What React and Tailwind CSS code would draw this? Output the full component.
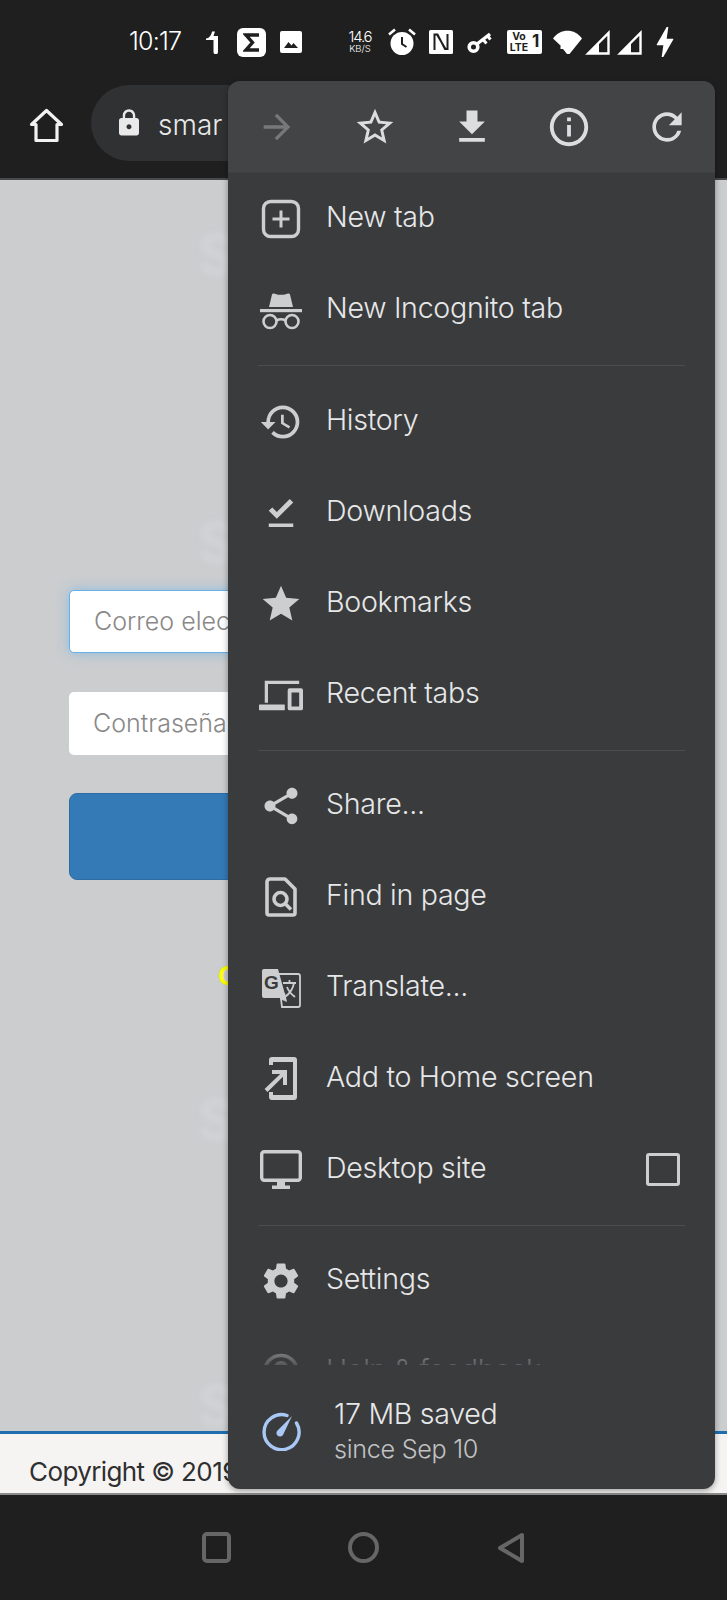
import {
  MdArrowForward,
  MdStarBorder,
  MdFileDownload,
  MdInfoOutline,
  MdRefresh,
  MdHistory,
  MdFileDownloadDone,
  MdStar,
  MdShare,
  MdSettings,
  MdHelpOutline,
  MdBolt,
  MdLock,
} from "react-icons/md";

const sans = "font-['Inter','Liberation_Sans',Arial,sans-serif]";

function HomeIcon() {
  return (
    <svg width="35" height="35" viewBox="0 0 35 35" fill="none" stroke="#f2f2f2" strokeWidth="3.200" strokeLinejoin="round">
      <path d="M17.500 2.500 2.500 16.500h4.500v16h21v-16h4.500z" />
    </svg>
  );
}

function NewTabIcon() {
  return (
    <svg width="40" height="40" viewBox="0 0 40 40" fill="none" stroke="currentColor">
      <rect x="2.500" y="2.500" width="35" height="35" rx="7" strokeWidth="3.400" />
      <path d="M20 11.500v17M11.500 20h17" strokeWidth="3" />
    </svg>
  );
}

function IncognitoIcon() {
  return (
    <svg width="44" height="40" viewBox="0 0 44 40" fill="currentColor">
      <path d="M10 17 13 4.500c.3-1 1.200-1.300 2-1l4 1.300h6l4-1.300c.8-.3 1.700 0 2 1L34 17z" />
      <rect x="1" y="19" width="42" height="3.200" />
      <g fill="none" stroke="currentColor" strokeWidth="2.600">
        <circle cx="11" cy="31.500" r="6.500" />
        <circle cx="33" cy="31.500" r="6.500" />
        <path d="M17.500 30.500c2.800-1.600 6.200-1.600 9 0" />
      </g>
    </svg>
  );
}

function RecentTabsIcon() {
  return (
    <svg width="46" height="32" viewBox="0 0 46 32" fill="currentColor">
      <path d="M6 1h36v3.400H9.400V24H6z" />
      <rect x="0" y="26" width="27" height="6" rx="0.500" />
      <path fillRule="evenodd" d="M32 9h12a2 2 0 0 1 2 2v19a2 2 0 0 1-2 2H32a2 2 0 0 1-2-2V11a2 2 0 0 1 2-2zm2 4.500V28h8V13.500z" />
    </svg>
  );
}

function FindIcon() {
  return (
    <svg width="32" height="40" viewBox="0 0 32 40" fill="none" stroke="currentColor" strokeWidth="3.600">
      <path d="M5 2h15l10 10v24a2 2 0 0 1-2 2H4a2 2 0 0 1-2-2V5a3 3 0 0 1 3-3z" strokeLinejoin="round" />
      <circle cx="15.500" cy="22" r="6.500" />
      <path d="M20.500 27 26 32.500" />
    </svg>
  );
}

function TranslateIcon() {
  return (
    <svg width="40" height="40" viewBox="0 0 40 40">
      <path d="M17 6h20a2 2 0 0 1 2 2v29a2 2 0 0 1-2 2H21l-4-33z" fill="none" stroke="currentColor" strokeWidth="1.800" />
      <path d="M3 1h14l8 29H3a2 2 0 0 1-2-2V3a2 2 0 0 1 2-2z" fill="currentColor" />
      <path d="M19 25h5l2 9-7-3z" fill="currentColor" />
      <text x="3" y="21" fontSize="19" fontWeight="700" fill="#3a3b3d" fontFamily="Liberation Sans">G</text>
      <path d="M22 15h13M28.500 12v3M33 15c-1 6-5 11-9 14M26 19c1.500 4 4 7 8 10" fill="none" stroke="currentColor" strokeWidth="1.800" />
    </svg>
  );
}

function AddHomeIcon() {
  return (
    <svg width="34" height="43" viewBox="0 0 34 43" fill="currentColor">
      <path d="M8 0h22a3 3 0 0 1 3 3v37a3 3 0 0 1-3 3H8a3 3 0 0 1-3-3v-5h4v3h20V5H9v3H5V3a3 3 0 0 1 3-3z" />
      <path d="M8 13h15v15h-4v-8.200L3.500 35 .6 32.100 16.200 17H8z" />
    </svg>
  );
}

function DesktopIcon() {
  return (
    <svg width="42" height="39" viewBox="0 0 42 39" fill="none">
      <rect x="1.700" y="1.700" width="38.600" height="28.600" rx="2.500" stroke="currentColor" strokeWidth="3.400" />
      <path d="M17 32h8v3.500h5V39H12v-3.500h5z" fill="currentColor" />
    </svg>
  );
}

function SavingsIcon() {
  return (
    <svg width="40" height="40" viewBox="0 0 40 40" fill="none">
      <path d="M26 4.500A17.500 17.500 0 1 0 35.500 12" stroke="#a9c8f5" strokeWidth="3.400" strokeLinecap="round" />
      <path d="M31 5 17 19a3.600 3.600 0 1 0 5 5z" fill="#a9c8f5" />
    </svg>
  );
}

function AlarmIcon() {
  return (
    <svg width="28" height="28" viewBox="0 0 28 28" className="ml-[13px]">
      <circle cx="14" cy="15.500" r="11.500" fill="white" />
      <path d="M14 9v7l4.500 3" fill="none" stroke="#1f1f20" strokeWidth="2" />
      <path d="M1 6.500 7 1.500M27 6.500 21 1.500" stroke="white" strokeWidth="2.600" />
    </svg>
  );
}

function KeyIcon() {
  return (
    <svg width="26" height="24" viewBox="0 0 26 24" className="ml-[14px]" fill="none" stroke="white">
      <circle cx="6.500" cy="17" r="4.300" strokeWidth="3.600" />
      <path d="M10 14 23 4" strokeWidth="3.400" />
      <path d="M16 9.500l3.500 4M20.500 6l3 3.500" strokeWidth="3" />
    </svg>
  );
}

function SignalIcon({ className }) {
  return (
    <svg width="25" height="25" viewBox="0 0 25 25" className={className} fill="none" stroke="white" strokeWidth="2.400">
      <path d="M3 23.500 23.500 3v20.500z" />
      <path d="M3 23.500 14 12.500v11z" fill="white" stroke="none" />
    </svg>
  );
}

function StatusGlyphs() {
  return (
    <div className={`flex items-center h-[84px] shrink-0 pl-[129px] text-white ${sans}`}>
      <span className="text-[25px] font-light tracking-[-0.800px] w-[72px]">10:17</span>
      <svg width="14" height="24" viewBox="0 0 14 24" fill="white" className="ml-[4px]">
        <path d="M8.500 6h4.500v16a2 2 0 0 1-4.500 0V10H1V8.500C4 8.500 6.500 5 7 1.500h3z" />
      </svg>
      <div className="ml-[18px] w-[29px] h-[29px] rounded-[6px] bg-white flex items-center justify-center">
        <svg width="17" height="19" viewBox="0 0 17 19" fill="none" stroke="#1f1f20" strokeWidth="3.400">
          <path d="M16 2H3l6.500 7.500L3 17h13" />
        </svg>
      </div>
      <svg width="22" height="22" viewBox="0 0 22 22" className="ml-[14px]">
        <rect width="22" height="22" rx="2" fill="white" />
        <path d="M4 17l4.500-6 3 3.500 2-2.500L18 17z" fill="#1f1f20" />
      </svg>
      <div className="ml-[43px] w-[30px] flex flex-col items-center leading-none font-light">
        <span className="text-[15px] tracking-[-1.200px] leading-[14px]">14.6</span>
        <span className="text-[9.500px] leading-[10px]">KB/S</span>
      </div>
      <AlarmIcon />
      <svg width="24" height="24" viewBox="0 0 24 24" className="ml-[13px]">
        <rect width="24" height="24" rx="1.500" fill="white" />
        <path d="M5.500 20V4.500h3L16 19h2.500V4M5.500 4.500h3M8 4.500 16.500 19" fill="none" stroke="#1f1f20" strokeWidth="2" />
      </svg>
      <KeyIcon />
      <div className="ml-[14px] w-[35px] h-[24px] bg-white rounded-[2px] flex items-center text-[#1f1f20] font-bold">
        <div className="flex flex-col items-center w-[24px] leading-none">
          <span className="text-[10.500px] leading-[11px]">Vo</span>
          <span className="text-[10.500px] leading-[11px]">LTE</span>
        </div>
        <span className="text-[17px] ml-[1px]">1</span>
      </div>
      <svg width="29" height="25" viewBox="0 0 29 25" className="ml-[11px]" fill="white">
        <path d="M0 8.500C7-2 22-2 29 8.500L16.500 24H14l-4-5H7.500V16h.5z" />
      </svg>
      <SignalIcon className="ml-[3px]" />
      <SignalIcon className="ml-[7px]" />
      <MdBolt size={40} className="ml-[3px]" />
    </div>
  );
}

function Row({ icon, label, children }) {
  return (
    <div className="h-[91px] flex items-center pl-[31px] pr-[35px] shrink-0">
      <div className="w-[44px] h-[44px] flex items-center justify-center text-[#ccced0]">{icon}</div>
      <span className="ml-[23px] mb-[2px] text-[28.600px] font-light text-[#e6e7e8] tracking-[-0.300px]">{label}</span>
      {children}
    </div>
  );
}

function Divider({ className }) {
  return (
    <div className={`flex items-center pl-[30px] pr-[30px] shrink-0 ${className}`}>
      <div className="w-full h-px bg-[#4b4c4e]" />
    </div>
  );
}

function Menu() {
  return (
    <div className={`absolute left-[228px] top-[81px] w-[487px] h-[1408px] rounded-[12px] overflow-hidden bg-[#3a3b3d] flex flex-col shadow-[0_2px_6px_rgba(0,0,0,0.35)] ${sans}`}>
      <div className="h-[92px] shrink-0 bg-[#434446] border-b border-[#3f4042] flex items-center text-[#dcdddf]">
        <div className="w-[98px] flex justify-center"><MdArrowForward size={40} className="text-[#77787a]" /></div>
        <div className="w-[97px] flex justify-center"><MdStarBorder size={44} /></div>
        <div className="w-[97px] flex justify-center"><MdFileDownload size={44} /></div>
        <div className="w-[98px] flex justify-center"><MdInfoOutline size={46} /></div>
        <div className="w-[97px] flex justify-center"><MdRefresh size={44} /></div>
      </div>

      <div className="h-[1192px] shrink-0 overflow-hidden flex flex-col relative">
        <Row icon={<NewTabIcon />} label="New tab" />
        <Row icon={<IncognitoIcon />} label="New Incognito tab" />
        <Divider className="h-[21px]" />
        <Row icon={<MdHistory size={46} />} label="History" />
        <Row icon={<MdFileDownloadDone size={42} />} label="Downloads" />
        <Row icon={<MdStar size={46} />} label="Bookmarks" />
        <Row icon={<RecentTabsIcon />} label="Recent tabs" />
        <Divider className="h-[20px]" />
        <Row icon={<MdShare size={44} />} label="Share..." />
        <Row icon={<FindIcon />} label="Find in page" />
        <Row icon={<TranslateIcon />} label="Translate..." />
        <Row icon={<AddHomeIcon />} label="Add to Home screen" />
        <Row icon={<DesktopIcon />} label="Desktop site">
          <div className="ml-auto w-[34px] h-[33px] border-[3px] border-[#ccced0] rounded-[3px]" />
        </Row>
        <Divider className="h-[20px]" />
        <Row icon={<MdSettings size={46} />} label="Settings" />
        <Row icon={<MdHelpOutline size={44} />} label="Help & feedback" />
        <div className="absolute left-0 right-0 bottom-0 h-[26px] bg-gradient-to-b from-[#3a3b3d]/30 to-[#3a3b3d]/80" />
      </div>

      <div className="flex-1 flex items-center pl-[31px] pt-[8px]">
        <div className="w-[44px] h-[44px] flex items-center justify-center"><SavingsIcon /></div>
        <div className="ml-[31px] flex flex-col">
          <span className="text-[28.600px] font-light leading-[36px] text-[#e6e7e8] tracking-[-0.300px]">17 MB saved</span>
          <span className="text-[25.200px] font-light leading-[34px] text-[#c2c3c5] tracking-[-0.300px]">since Sep 10</span>
        </div>
      </div>
    </div>
  );
}

export default function App() {
  return (
    <div className={`relative w-[727px] h-[1600px] overflow-hidden flex flex-col bg-[#1f1f20] ${sans}`}>
      <StatusGlyphs />

      <div className="h-[96px] shrink-0 flex items-start border-b-[2px] border-[#48494a]">
        <div className="ml-[29px] mt-[24px]"><HomeIcon /></div>
        <div className="ml-[27px] mt-[1px] w-[300px] h-[76px] rounded-full bg-[#303133] flex items-center pl-[23px] text-[#e9e9e9]">
          <MdLock size={30} />
          <span className="ml-[14px] mt-[3px] text-[28px] font-light">smar</span>
        </div>
      </div>

      <div className="relative flex-1 bg-[#cbcdcf] overflow-hidden">
        {[47, 335, 912, 1198].map((t) => (
          <span key={t} className="absolute left-[198px] text-[56px] leading-none font-bold text-[#d1d3d5] blur-[3px]" style={{ top: t }}>
            S
          </span>
        ))}
        <div className="relative px-[69px] pt-[410px] flex flex-col">
          <div className="h-[63px] bg-white rounded-[5px] border border-[#66afe9] shadow-[0_0_12px_rgba(102,175,233,0.6)] flex items-center pl-[24px] text-[25px] font-light text-[#888]">
            Correo electrónico
          </div>
          <div className="mt-[39px] h-[63px] bg-white rounded-[5px] flex items-center pl-[24px] text-[25px] font-light text-[#888]">
            Contraseña
          </div>
          <div className="mt-[38px] h-[87px] bg-[#337ab7] border border-[#2e6da4] rounded-[8px]" />
          <div className="mt-[76px] ml-[149px] text-[26px] font-bold text-[#ffff00]">C</div>
        </div>
      </div>

      <div className="h-[62px] shrink-0 bg-[#f5f4f3] border-t-[3px] border-[#1f6fb0] flex items-center pl-[29px] pt-[16px] text-[26px] tracking-[-0.600px] text-[#2f2f2f]">
        Copyright © 2019
      </div>

      <div className="h-[107px] shrink-0 border-t-[2px] border-[#8a8a8a] flex items-center justify-center text-[#666]">
        <div className="w-[29px] h-[31px] ml-[-1px] border-[4px] border-[#666] rounded-[5px]" />
        <div className="w-[31px] h-[31px] ml-[117px] border-[4px] border-[#666] rounded-full" />
        <svg width="28" height="32" viewBox="0 0 28 32" fill="none" stroke="#666" strokeWidth="4" strokeLinejoin="round" className="ml-[118px]">
          <path d="M25 3v26L3 16z" />
        </svg>
      </div>

      <Menu />
    </div>
  );
}
